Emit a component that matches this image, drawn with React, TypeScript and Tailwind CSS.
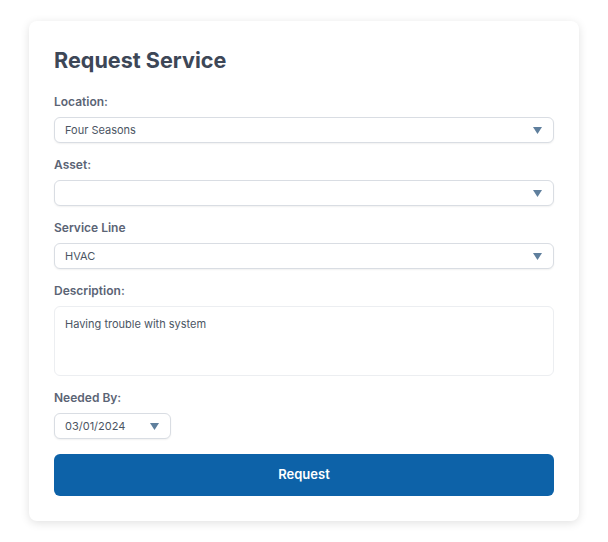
import React from 'react'

function Caret() {
  return (
    <svg width="9" height="7" viewBox="0 0 9 7" className="shrink-0">
      <path d="M0 0 H9 L4.5 7 Z" fill="#5f7f9d" />
    </svg>
  )
}

function Label({ text }: { text: string }) {
  return (
    <div className="mb-[7px] text-[12px] font-semibold leading-4 text-[#5b6475]">
      {text}
    </div>
  )
}

function Select({ value }: { value: string }) {
  return (
    <div className="flex h-[26px] w-full items-center justify-between rounded-[6px] border border-[#d9dde3] bg-white pl-[10px] pr-[11px] shadow-[0_1px_2px_rgba(0,0,0,0.06)]">
      <span className="text-[11px] text-[#4b5563]">{value}</span>
      <Caret />
    </div>
  )
}

export default function App() {
  return (
    <div
      className="min-h-[542px] bg-white pt-[21px] pl-[29px]"
      style={{ fontFamily: 'Inter, "Noto Sans", sans-serif' }}
    >
      <div className="flex w-[550px] flex-col rounded-[8px] bg-white px-[25px] pt-[25px] pb-[25px] shadow-[0_2px_10px_rgba(0,0,0,0.12)]">
        <h1 className="mb-[20px] text-[21.6px] font-bold leading-7 text-[#3d4757]">
          Request Service
        </h1>
        <div className="flex flex-col gap-[14px]">
          <div>
            <Label text="Location:" />
            <Select value="Four Seasons" />
          </div>
          <div>
            <Label text="Asset:" />
            <Select value="" />
          </div>
          <div>
            <Label text="Service Line" />
            <Select value="HVAC" />
          </div>
          <div>
            <Label text="Description:" />
            <div className="h-[70px] w-full rounded-[6px] border border-[#eceef1] bg-white px-[10px] pt-[9px] text-[11px] text-[#4b5563]">
              Having trouble with system
            </div>
          </div>
          <div>
            <Label text="Needed By:" />
            <div className="flex h-[26px] w-[117px] items-center justify-between rounded-[6px] border border-[#d9dde3] bg-white pl-[10px] pr-[11px] shadow-[0_1px_2px_rgba(0,0,0,0.06)]">
              <span className="text-[11px] text-[#4b5563]">03/01/2024</span>
              <Caret />
            </div>
          </div>
        </div>
        <button className="mt-[15px] h-[42px] w-full rounded-[6px] bg-[#0d62a8] text-[13px] font-semibold text-white">
          Request
        </button>
      </div>
    </div>
  )
}
